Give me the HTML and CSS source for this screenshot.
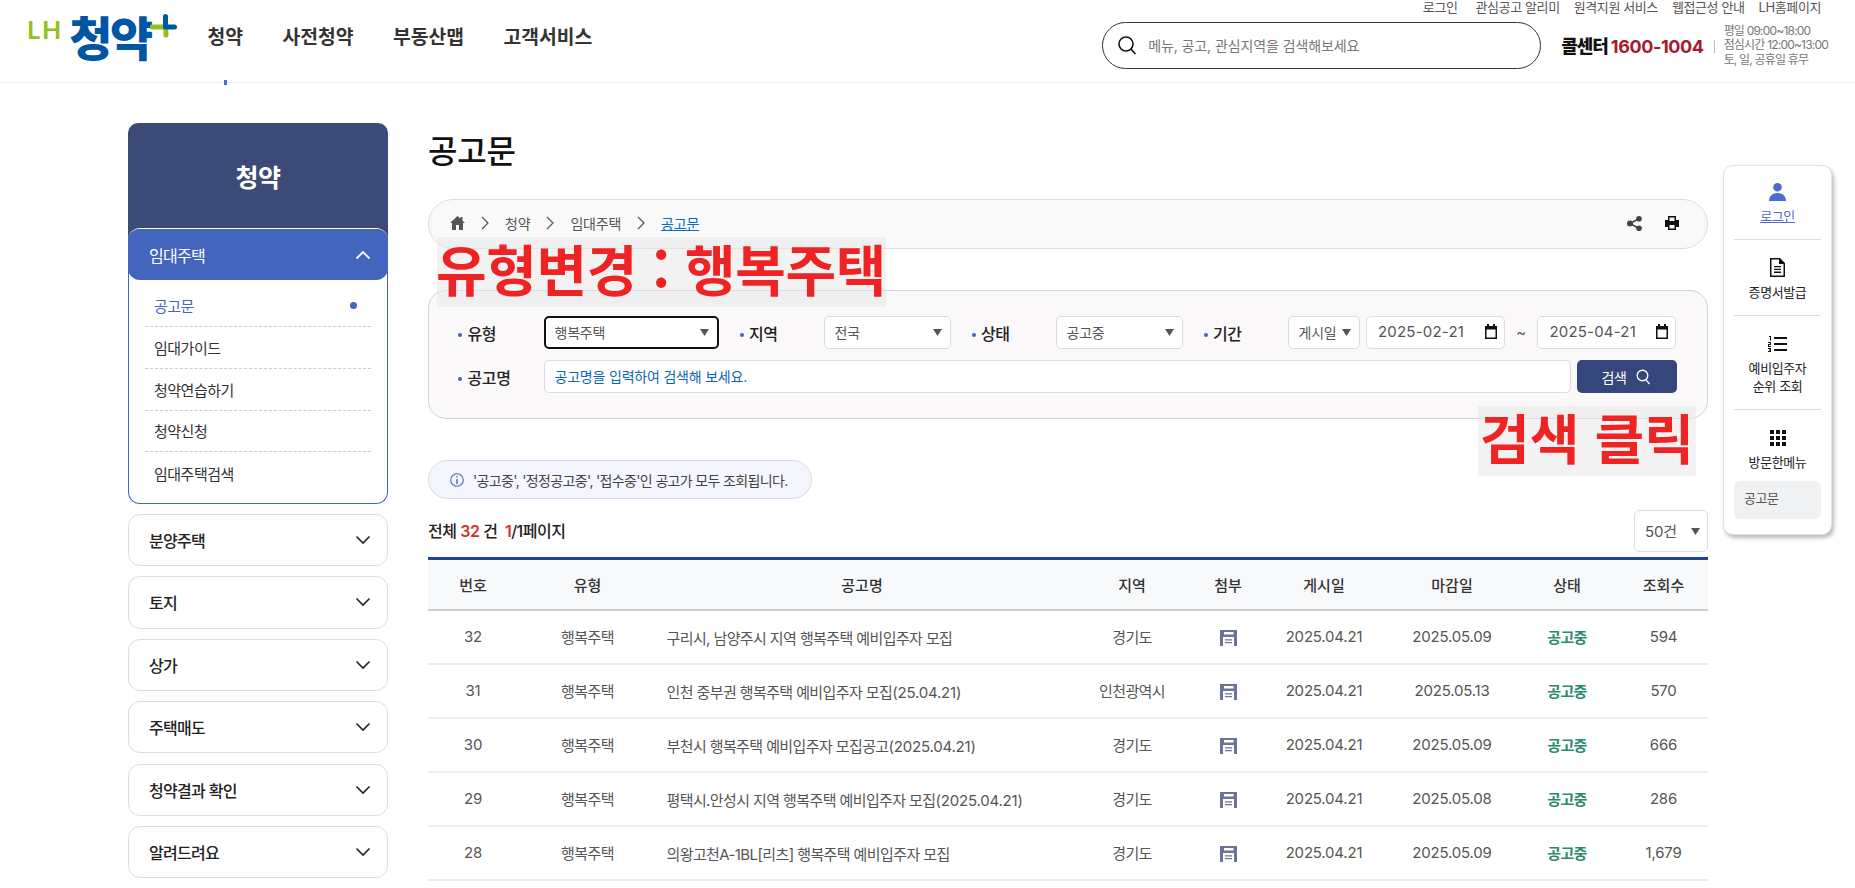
FILE: index.html
```html
<!DOCTYPE html>
<html lang="ko">
<head>
  <meta charset="UTF-8">
  <title>공고문 | LH 청약플러스</title>
  <link rel="stylesheet" href="styles.css">
</head>
<body>

<svg class="defs" width="0" height="0">
  <symbol id="ico-file" viewBox="0 0 17 16">
    <path fill="#6c7396" d="M0 0h17v16H0z"/>
    <path fill="#fff" d="M4 2h9.500v2.500H4zM3 7h11v9H3z"/>
    <path fill="#6c7396" d="M5 9.300h7v1.200H5zM5 12h7v1.200H5z"/>
  </symbol>
  <symbol id="ico-crumb" viewBox="0 0 8 14">
    <path d="M1 1l6 6-6 6" fill="none" stroke="#555" stroke-width="1.200"/>
  </symbol>
  <symbol id="ico-down" viewBox="0 0 16 10">
    <path d="M1.500 1.500L8 8l6.500-6.500" fill="none" stroke="#222" stroke-width="1.600"/>
  </symbol>
  <symbol id="ico-cal" viewBox="0 0 12 15">
    <path fill="#111" d="M2 0h2v2h4V0h2v2h2v13H0V2h2zM1.500 5.500v8h9v-8z"/>
  </symbol>
</svg>

<header class="top">
  <div class="top-left">
    <a class="logo">
      <span class="logo-lh">LH</span>
      <span class="logo-name">청약</span>
      <svg class="logo-plus" width="27" height="28" viewBox="0 0 27 28">
        <path d="M2 13h13c0 0 1 0 1 8" fill="none" stroke="#93c01f" stroke-width="5" stroke-linecap="round"/>
        <path d="M15.500 2.500V13M15.500 13H24.500" fill="none" stroke="#0056a4" stroke-width="5" stroke-linecap="round"/>
      </svg>
    </a>
    <nav class="gnb">
      <a>청약</a>
      <a>사전청약</a>
      <a>부동산맵</a>
      <a>고객서비스</a>
    </nav>
  </div>
  <div class="top-right">
    <div class="util">
      <a class="util-login">로그인</a>
      <a>관심공고 알리미</a>
      <a>원격지원 서비스</a>
      <a>웹접근성 안내</a>
      <a>LH홈페이지</a>
    </div>
    <div class="top-row">
      <div class="top-search">
        <svg width="20" height="20" viewBox="0 0 20 20">
          <circle cx="9" cy="9" r="7" fill="none" stroke="#111" stroke-width="1.600"/>
          <path d="M14 14l4.500 5" stroke="#111" stroke-width="1.600"/>
        </svg>
        <span>메뉴, 공고, 관심지역을 검색해보세요</span>
      </div>
      <div class="call">콜센터 <b>1600-1004</b></div>
      <div class="hours">
        <span>평일 09:00~18:00</span>
        <span>점심시간 12:00~13:00</span>
        <span>토, 일, 공휴일 휴무</span>
      </div>
    </div>
  </div>
  <i class="top-mark"></i>
</header>

<div class="wrap">
  <aside class="side">
    <div class="side-title">청약</div>
    <div class="side-group open">
      <div class="side-head">
        임대주택
        <svg class="arrow" width="16" height="10" viewBox="0 0 16 10"><path d="M1.500 8.500L8 2l6.500 6.500" fill="none" stroke="#fff" stroke-width="1.800"/></svg>
      </div>
      <ul class="side-sub">
        <li class="on">공고문</li>
        <li>임대가이드</li>
        <li>청약연습하기</li>
        <li>청약신청</li>
        <li>임대주택검색</li>
      </ul>
    </div>
    <div class="side-group"><div class="side-head">분양주택 <svg class="arrow" width="16" height="10"><use href="#ico-down"/></svg></div></div>
    <div class="side-group"><div class="side-head">토지 <svg class="arrow" width="16" height="10"><use href="#ico-down"/></svg></div></div>
    <div class="side-group"><div class="side-head">상가 <svg class="arrow" width="16" height="10"><use href="#ico-down"/></svg></div></div>
    <div class="side-group"><div class="side-head">주택매도 <svg class="arrow" width="16" height="10"><use href="#ico-down"/></svg></div></div>
    <div class="side-group"><div class="side-head">청약결과 확인 <svg class="arrow" width="16" height="10"><use href="#ico-down"/></svg></div></div>
    <div class="side-group"><div class="side-head">알려드려요 <svg class="arrow" width="16" height="10"><use href="#ico-down"/></svg></div></div>
  </aside>

  <main class="content">
    <h1>공고문</h1>

    <div class="crumb">
      <svg width="15" height="14" viewBox="0 0 15 14"><path fill="#555" d="M7.500 0L0 7h2v7h4V9h3v5h4V7h2l-2.500-2.300V1h-2v1.800z"/></svg>
      <svg class="chev" width="8" height="14"><use href="#ico-crumb"/></svg>
      <span>청약</span>
      <svg class="chev" width="8" height="14"><use href="#ico-crumb"/></svg>
      <span>임대주택</span>
      <svg class="chev" width="8" height="14"><use href="#ico-crumb"/></svg>
      <a>공고문</a>
      <div class="crumb-tools">
        <svg width="15" height="15" viewBox="0 0 15 15">
          <path d="M12 2.500L3 7.500l9 5" fill="none" stroke="#444" stroke-width="1.500"/>
          <circle cx="12" cy="2.800" r="2.800" fill="#444"/><circle cx="3" cy="7.500" r="3" fill="#444"/><circle cx="12" cy="12.200" r="2.800" fill="#444"/>
        </svg>
        <svg width="14" height="14" viewBox="0 0 14 14">
          <path fill="#111" d="M3 0h8v4h3v7h-3v3H3v-3H0V4h3zM4.500 1.500V5h5V1.500zM4.500 9v3.500h5V9z"/>
        </svg>
      </div>
    </div>

    <form class="search">
      <div class="search-row">
        <label class="lbl w85">유형</label>
        <select class="sel focus w173"><option>행복주택</option></select>
        <label class="lbl w84 ml22">지역</label>
        <select class="sel w125"><option>전국</option></select>
        <label class="lbl w84 ml22">상태</label>
        <select class="sel w125"><option>공고중</option></select>
        <label class="lbl w84 ml22">기간</label>
        <select class="sel w72"><option>게시일</option></select>
        <div class="date">2025-02-21 <svg width="12" height="15"><use href="#ico-cal"/></svg></div>
        <span class="tilde">~</span>
        <div class="date">2025-04-21 <svg width="12" height="15"><use href="#ico-cal"/></svg></div>
      </div>
      <div class="search-row">
        <label class="lbl w85">공고명</label>
        <input class="keyword" type="text" placeholder="공고명을 입력하여 검색해 보세요.">
        <button class="btn" type="button">검색
          <svg width="15" height="16" viewBox="0 0 15 16"><circle cx="6.500" cy="6.500" r="5.300" fill="none" stroke="#fff" stroke-width="1.400"/><path d="M10 11l3.500 4" stroke="#fff" stroke-width="1.400"/></svg>
        </button>
      </div>
    </form>

    <div class="info">
      <svg width="14" height="14" viewBox="0 0 14 14"><circle cx="7" cy="7" r="6.300" fill="none" stroke="#4a62c8" stroke-width="1.100"/><path d="M7 6v5M7 3v1.600" stroke="#4a62c8" stroke-width="1.400"/></svg>
      '공고중', '정정공고중', '접수중'인 공고가 모두 조회됩니다.
    </div>

    <div class="list-bar">
      <p>전체 <em>32</em> 건 &nbsp;<em>1</em>/1페이지</p>
      <select class="sel per"><option>50건</option></select>
    </div>

    <table class="board">
      <colgroup>
        <col class="c-no"><col class="c-type"><col class="c-title"><col class="c-area"><col class="c-file">
        <col class="c-date"><col class="c-end"><col class="c-state"><col class="c-view">
      </colgroup>
      <thead>
        <tr><th>번호</th><th>유형</th><th>공고명</th><th>지역</th><th>첨부</th><th>게시일</th><th>마감일</th><th>상태</th><th>조회수</th></tr>
      </thead>
      <tbody>
        <tr><td>32</td><td class="ko">행복주택</td><td class="tit">구리시, 남양주시 지역 행복주택 예비입주자 모집</td><td class="ko">경기도</td><td><svg class="file" width="17" height="16"><use href="#ico-file"/></svg></td><td>2025.04.21</td><td>2025.05.09</td><td class="state">공고중</td><td>594</td></tr>
        <tr><td>31</td><td class="ko">행복주택</td><td class="tit">인천 중부권 행복주택 예비입주자 모집<span class="num">(25.04.21)</span></td><td class="ko">인천광역시</td><td><svg class="file" width="17" height="16"><use href="#ico-file"/></svg></td><td>2025.04.21</td><td>2025.05.13</td><td class="state">공고중</td><td>570</td></tr>
        <tr><td>30</td><td class="ko">행복주택</td><td class="tit">부천시 행복주택 예비입주자 모집공고<span class="num">(2025.04.21)</span></td><td class="ko">경기도</td><td><svg class="file" width="17" height="16"><use href="#ico-file"/></svg></td><td>2025.04.21</td><td>2025.05.09</td><td class="state">공고중</td><td>666</td></tr>
        <tr><td>29</td><td class="ko">행복주택</td><td class="tit">평택시.안성시 지역 행복주택 예비입주자 모집<span class="num">(2025.04.21)</span></td><td class="ko">경기도</td><td><svg class="file" width="17" height="16"><use href="#ico-file"/></svg></td><td>2025.04.21</td><td>2025.05.08</td><td class="state">공고중</td><td>286</td></tr>
        <tr><td>28</td><td class="ko">행복주택</td><td class="tit">의왕고천A-1BL[리츠] 행복주택 예비입주자 모집</td><td class="ko">경기도</td><td><svg class="file" width="17" height="16"><use href="#ico-file"/></svg></td><td>2025.04.21</td><td>2025.05.09</td><td class="state">공고중</td><td>1,679</td></tr>
      </tbody>
    </table>

    <div class="note note-type">유형변경 : 행복주택</div>
    <div class="note note-click">검색 클릭</div>
  </main>
</div>

<div class="quick">
  <a class="quick-item login">
    <svg width="17" height="18" viewBox="0 0 17 18"><circle cx="8.500" cy="4.300" r="4.300" fill="#4f69cf"/><path fill="#4f69cf" d="M0 18c0-5 3.500-8 8.500-8s8.500 3 8.500 8z"/></svg>
    <span>로그인</span>
  </a>
  <a class="quick-item doc">
    <svg width="15" height="19" viewBox="0 0 15 19"><path fill="#111" d="M0 0h10l5 5v14H0zM1.500 1.500v16h12V6H9V1.500z"/><path fill="#111" d="M4 8h7v1.300H4zM4 10.800h7v1.300H4zM4 13.600h7v1.300H4z"/></svg>
    <span>증명서발급</span>
  </a>
  <a class="quick-item rank">
    <svg width="19" height="16" viewBox="0 0 19 16"><path fill="#111" d="M6 1h13v2H6zM6 7h13v2H6zM6 13h13v2H6z"/><path fill="#111" d="M1 0h2v4.500H2V1H1zM0 6h3v3H1v1h2v1H0V8h2V7H0zM0 12h3v4H0v-1h2v-.6H1v-.8h1V13H0z"/></svg>
    <span>예비입주자<br>순위 조회</span>
  </a>
  <a class="quick-item last">
    <svg width="16" height="16" viewBox="0 0 16 16"><path fill="#111" d="M0 0h4v4H0zM6 0h4v4H6zM12 0h4v4h-4zM0 6h4v4H0zM6 6h4v4H6zM12 6h4v4h-4zM0 12h4v4H0zM6 12h4v4H6zM12 12h4v4h-4z"/></svg>
    <span>방문한메뉴</span>
  </a>
  <div class="quick-visited">공고문</div>
</div>

</body>
</html>
```

FILE: styles.css
```css
html, body {
  height: 888px;
  overflow: hidden;
}
body {
  margin: 0;
  position: relative;
  font-family: Inter, 'Noto Sans CJK KR', sans-serif;
  font-size: 15px;
  letter-spacing: -0.6px;
  color: #555;
  background: #fff;
}
.defs {
  position: absolute;
}
ul, h1, p {
  margin: 0;
  padding: 0;
}
ul {
  list-style: none;
}

/* header */
.top {
  position: relative;
  display: flex;
  justify-content: space-between;
  height: 82px;
  border-bottom: 1px solid #eee;
}
.top-left {
  display: flex;
  align-items: center;
  height: 72px;
  padding-left: 27px;
}
.logo {
  display: flex;
  align-items: center;
  width: 180.500px;
}
.logo-lh {
  font-family: Lato, sans-serif;
  font-size: 25px;
  font-weight: 700;
  letter-spacing: 2px;
  line-height: 30px;
  color: #93c01f;
  margin: -14px 0 0 0;
}
.logo-name {
  font-family: 'Noto Sans CJK KR', sans-serif;
  font-size: 47px;
  font-weight: 900;
  letter-spacing: -2.500px;
  line-height: 44px;
  color: #0056a4;
  margin-left: 6px;
}
.logo-plus {
  margin: -17px 0 0 -1px;
}
.gnb {
  display: flex;
  gap: 39.500px;
  padding-top: 2px;
}
.gnb a {
  font-size: 19.300px;
  font-weight: 600;
  letter-spacing: 0;
  line-height: 26px;
  color: #333;
}
.top-mark {
  position: absolute;
  left: 224px;
  top: 80px;
  width: 3px;
  height: 5px;
  background: #4f69cf;
}
.top-right {
  display: flex;
  flex-direction: column;
  padding-right: 34px;
}
.util {
  display: flex;
  justify-content: flex-end;
  gap: 14px;
  height: 22px;
  font-size: 13px;
  letter-spacing: -0.400px;
  line-height: 14px;
  color: #555;
}
.util-login {
  margin-right: 4px;
}
.top-row {
  display: flex;
  align-items: center;
  height: 47px;
}
.top-search {
  display: flex;
  align-items: center;
  gap: 11px;
  box-sizing: border-box;
  width: 439px;
  height: 47px;
  padding: 0 0 2px 14px;
  border: 1px solid #333;
  border-radius: 24px;
  font-size: 14px;
  letter-spacing: -0.100px;
  color: #777;
}
.call {
  margin-left: 20px;
  padding-bottom: 2px;
  font-size: 18px;
  font-weight: 800;
  letter-spacing: -1px;
  color: #111;
  white-space: nowrap;
}
.call b {
  font-weight: 700;
  letter-spacing: -0.400px;
  color: #a6192e;
}
.hours {
  display: flex;
  flex-direction: column;
  margin: 0 -7px 0 10px;
  padding-left: 10px;
  position: relative;
  font-size: 12px;
  letter-spacing: -0.800px;
  line-height: 14.500px;
  color: #777;
  white-space: nowrap;
}
.hours::before {
  content: "";
  position: absolute;
  left: 0;
  top: 16px;
  width: 1px;
  height: 13px;
  background: #bbb;
}

/* layout */
.wrap {
  display: flex;
  gap: 40px;
  padding: 40px 0 0 128px;
}
.side {
  width: 260px;
  flex: none;
}
.content {
  position: relative;
  width: 1280px;
  flex: none;
}

/* side menu */
.side-title {
  height: 105px;
  padding-bottom: 12px;
  display: flex;
  align-items: center;
  justify-content: center;
  background: #3c4a78;
  border-radius: 10px 10px 0 0;
  font-size: 25px;
  font-weight: 700;
  letter-spacing: -0.500px;
  color: #fff;
}
.side-group {
  position: relative;
  margin-top: 10.200px;
  box-sizing: border-box;
  border: 1px solid #ddd;
  border-radius: 12px;
  background: #fff;
}
.side-head {
  display: flex;
  align-items: center;
  justify-content: space-between;
  height: 50.200px;
  padding: 0 16px 0 20px;
  font-size: 16px;
  font-weight: 500;
  letter-spacing: -0.700px;
  color: #222;
}
.side-group.open {
  margin-top: -12px;
  margin-bottom: 11px;
  border: 0;
  border-top: 1px solid #fff;
  height: 275px;
  background: transparent;
  display: flex;
  flex-direction: column;
}
.side-group.open + .side-group {
  margin-top: 0;
}
.open .side-head {
  position: relative;
  height: 51px;
  flex: none;
  padding-left: 21px;
  padding-right: 17px;
  background: #4465bd;
  border-radius: 12px;
  color: #fff;
  font-weight: 400;
}
.side-sub {
  flex: 1;
  margin-top: -12px;
  padding: 17.500px 16px 9.500px;
  border: 1px solid #4465bd;
  border-top: 0;
  border-radius: 0 0 12px 12px;
  background: #fff;
}
.side-sub li {
  display: flex;
  align-items: center;
  justify-content: space-between;
  box-sizing: border-box;
  height: 41.700px;
  padding: 0 14px 0 9px;
  border-bottom: 1px dashed #ccc;
  font-size: 15px;
  letter-spacing: -0.500px;
  color: #333;
}
.side-sub li:last-child {
  border-bottom: 0;
}
.side-sub li.on {
  color: #4465bd;
}
.side-sub li.on::after {
  content: "";
  width: 7px;
  height: 7px;
  border-radius: 50%;
  background: #4465bd;
}

/* title + breadcrumb */
h1 {
  font-size: 32px;
  font-weight: 500;
  letter-spacing: -0.200px;
  line-height: 57px;
  color: #111;
}
.crumb {
  display: flex;
  align-items: center;
  gap: 16px;
  box-sizing: border-box;
  height: 50px;
  margin-top: 19px;
  padding: 0 28px 2px 21px;
  background: #f9f9f9;
  border: 1px solid #ddd;
  border-radius: 25px;
  font-size: 14px;
  letter-spacing: -0.200px;
  color: #555;
}
.crumb a {
  color: #0a6fb8;
  text-decoration: underline;
}
.crumb-tools {
  display: flex;
  align-items: center;
  gap: 23px;
  margin-left: auto;
}

/* search box */
.search {
  box-sizing: border-box;
  height: 129px;
  margin-top: 41px;
  padding: 25px 0 0 29px;
  display: flex;
  flex-direction: column;
  gap: 11px;
  background: #faf8f9;
  border: 1px solid #c8d4e8;
  border-radius: 18px;
}
.search-row {
  display: flex;
  align-items: center;
  height: 33px;
}
.lbl {
  flex: none;
  box-sizing: border-box;
  font-size: 16px;
  font-weight: 500;
  letter-spacing: -0.400px;
  color: #222;
}
.lbl::before {
  content: "";
  display: inline-block;
  width: 4px;
  height: 4px;
  margin-right: 5.500px;
  vertical-align: 3px;
  border-radius: 50%;
  background: #4465bd;
}
.w85 { width: 85.500px; }
.w84 { width: 84px; }
.ml22 { margin-left: 21px; }
.w173 { width: 175px; }
.w125 { width: 127px; }
.w72 { width: 72.500px; }
.sel {
  flex: none;
  box-sizing: border-box;
  height: 33px;
  padding: 0 0 0 10px;
  appearance: none;
  border: 1px solid #ddd;
  border-radius: 5px;
  background: #fff url("data:image/svg+xml,%3Csvg xmlns='http://www.w3.org/2000/svg' width='9' height='7'%3E%3Cpath fill='%23555' d='M0 0h9L4.500 7z'/%3E%3C/svg%3E") no-repeat right 8px center;
  font-family: inherit;
  font-size: 14px;
  letter-spacing: -0.200px;
  color: #555;
}
.sel.focus {
  border: 2px solid #111;
  padding-left: 9px;
}
.date {
  display: flex;
  align-items: center;
  justify-content: space-between;
  box-sizing: border-box;
  width: 138.700px;
  height: 33px;
  margin-left: 6px;
  padding: 0 7px 2px 11px;
  background: #fff;
  border: 1px solid #ddd;
  border-radius: 5px;
  letter-spacing: 0.200px;
  font-size: 15px;
  color: #555;
}
.tilde {
  width: 32.700px;
  margin-right: -6px;
  text-align: center;
  color: #555;
}
.keyword {
  box-sizing: border-box;
  width: 1027px;
  height: 33px;
  padding: 0 10px;
  background: #fff;
  border: 1px solid #ddd;
  border-radius: 5px;
  font-family: inherit;
  font-size: 14px;
  letter-spacing: -0.200px;
}
.keyword::placeholder {
  color: #0b67b5;
  opacity: 1;
}
.btn {
  display: flex;
  align-items: center;
  justify-content: center;
  gap: 9px;
  width: 100px;
  height: 33px;
  margin-left: 6.500px;
  padding-right: 8px;
  background: #34467c;
  border: 0;
  border-radius: 5px;
  font-family: inherit;
  font-size: 14px;
  letter-spacing: -0.300px;
  color: #fff;
}

/* info + list bar */
.info {
  display: flex;
  align-items: center;
  gap: 9px;
  box-sizing: border-box;
  width: 384px;
  height: 39px;
  margin-top: 41px;
  padding-left: 21px;
  background: #f5f6fd;
  border: 1px solid #d5d9ee;
  border-radius: 20px;
  font-size: 14px;
  letter-spacing: -0.650px;
  color: #444;
}
.list-bar {
  display: flex;
  align-items: center;
  justify-content: space-between;
  margin-top: 11px;
  height: 42px;
}
.list-bar p {
  padding-bottom: 2px;
  font-size: 16px;
  font-weight: 500;
  letter-spacing: -0.500px;
  color: #222;
}
.list-bar em {
  font-style: normal;
  font-weight: 600;
  color: #d0312d;
}
.sel.per {
  width: 74px;
  height: 42px;
  font-size: 15px;
  background-position: right 7px center;
}

/* table */
.board {
  width: 1280px;
  margin-top: 5px;
  table-layout: fixed;
  border-collapse: collapse;
  border-top: 3px solid #24429a;
  text-align: center;
}
.c-no { width: 90px; }
.c-type { width: 139px; }
.c-title { width: 410px; }
.c-area { width: 130px; }
.c-file { width: 62px; }
.c-date { width: 130px; }
.c-end { width: 126px; }
.c-state { width: 104px; }
.c-view { width: 89px; }
.board th {
  height: 49px;
  padding: 0;
  background: #f8f9fb;
  border-bottom: 2px solid #ccc;
  font-weight: 500;
  letter-spacing: 0;
  color: #333;
}
.board td {
  height: 50px;
  padding: 0 0 2px;
  border-bottom: 2px solid #eee;
  letter-spacing: -0.200px;
  color: #555;
  white-space: nowrap;
}
.board td.ko {
  letter-spacing: -0.600px;
}
.board td.tit {
  padding: 0 0 0 9.500px;
  height: 52px;
  letter-spacing: -0.600px;
  text-align: left;
}
.board .num {
  letter-spacing: -0.200px;
}
.board td.state {
  font-weight: 700;
  letter-spacing: -0.600px;
  color: #2b8a6b;
}
.file {
  display: block;
  margin: 4px auto 0;
}

/* red notes that were drawn over the capture */
.note {
  position: absolute;
  display: flex;
  align-items: center;
  justify-content: center;
  box-sizing: border-box;
  height: 70px;
  background: rgba(232, 232, 232, 0.55);
  font-family: 'Noto Sans CJK KR', sans-serif;
  font-weight: 700;
  line-height: 1;
  letter-spacing: 0;
  color: #ee2424;
  white-space: nowrap;
}
.note-type {
  left: 8.500px;
  top: 114px;
  width: 449px;
  padding-bottom: 10px;
  font-size: 55px;
  letter-spacing: -0.300px;
}
.note-click {
  left: 1050px;
  top: 283px;
  width: 218px;
  padding-bottom: 8px;
  font-size: 54px;
}

/* quick menu */
.quick {
  position: absolute;
  left: 1723px;
  top: 165px;
  box-sizing: border-box;
  width: 109px;
  height: 370px;
  padding: 0 10px;
  background: #fff;
  border: 1px solid #e2e2e2;
  border-radius: 10px;
  box-shadow: 2px 3px 4px rgba(0, 0, 0, 0.28);
}
.quick-item {
  display: flex;
  flex-direction: column;
  align-items: center;
  box-sizing: border-box;
  border-bottom: 1px solid #ddd;
  font-size: 13px;
  letter-spacing: -0.400px;
  line-height: 18px;
  text-align: center;
  color: #222;
}
.quick-item svg {
  margin-bottom: 7px;
}
.quick-item.login {
  height: 74px;
  padding-top: 17px;
}
.quick-item.login svg {
  margin-bottom: 6px;
}
.quick-item.login span {
  color: #4f69cf;
  text-decoration: underline;
}
.quick-item.doc {
  height: 76px;
  padding-top: 18px;
}
.quick-item.doc svg {
  margin-bottom: 6px;
}
.quick-item.rank {
  height: 94px;
  padding-top: 20px;
}
.quick-item.last {
  height: 71px;
  padding-top: 20px;
  border-bottom: 0;
}
.quick-visited {
  box-sizing: border-box;
  height: 38px;
  padding: 8px 10px;
  background: #f0f1f3;
  border-radius: 6px;
  font-size: 13px;
  letter-spacing: -0.400px;
  line-height: 18px;
  color: #555;
}
```
